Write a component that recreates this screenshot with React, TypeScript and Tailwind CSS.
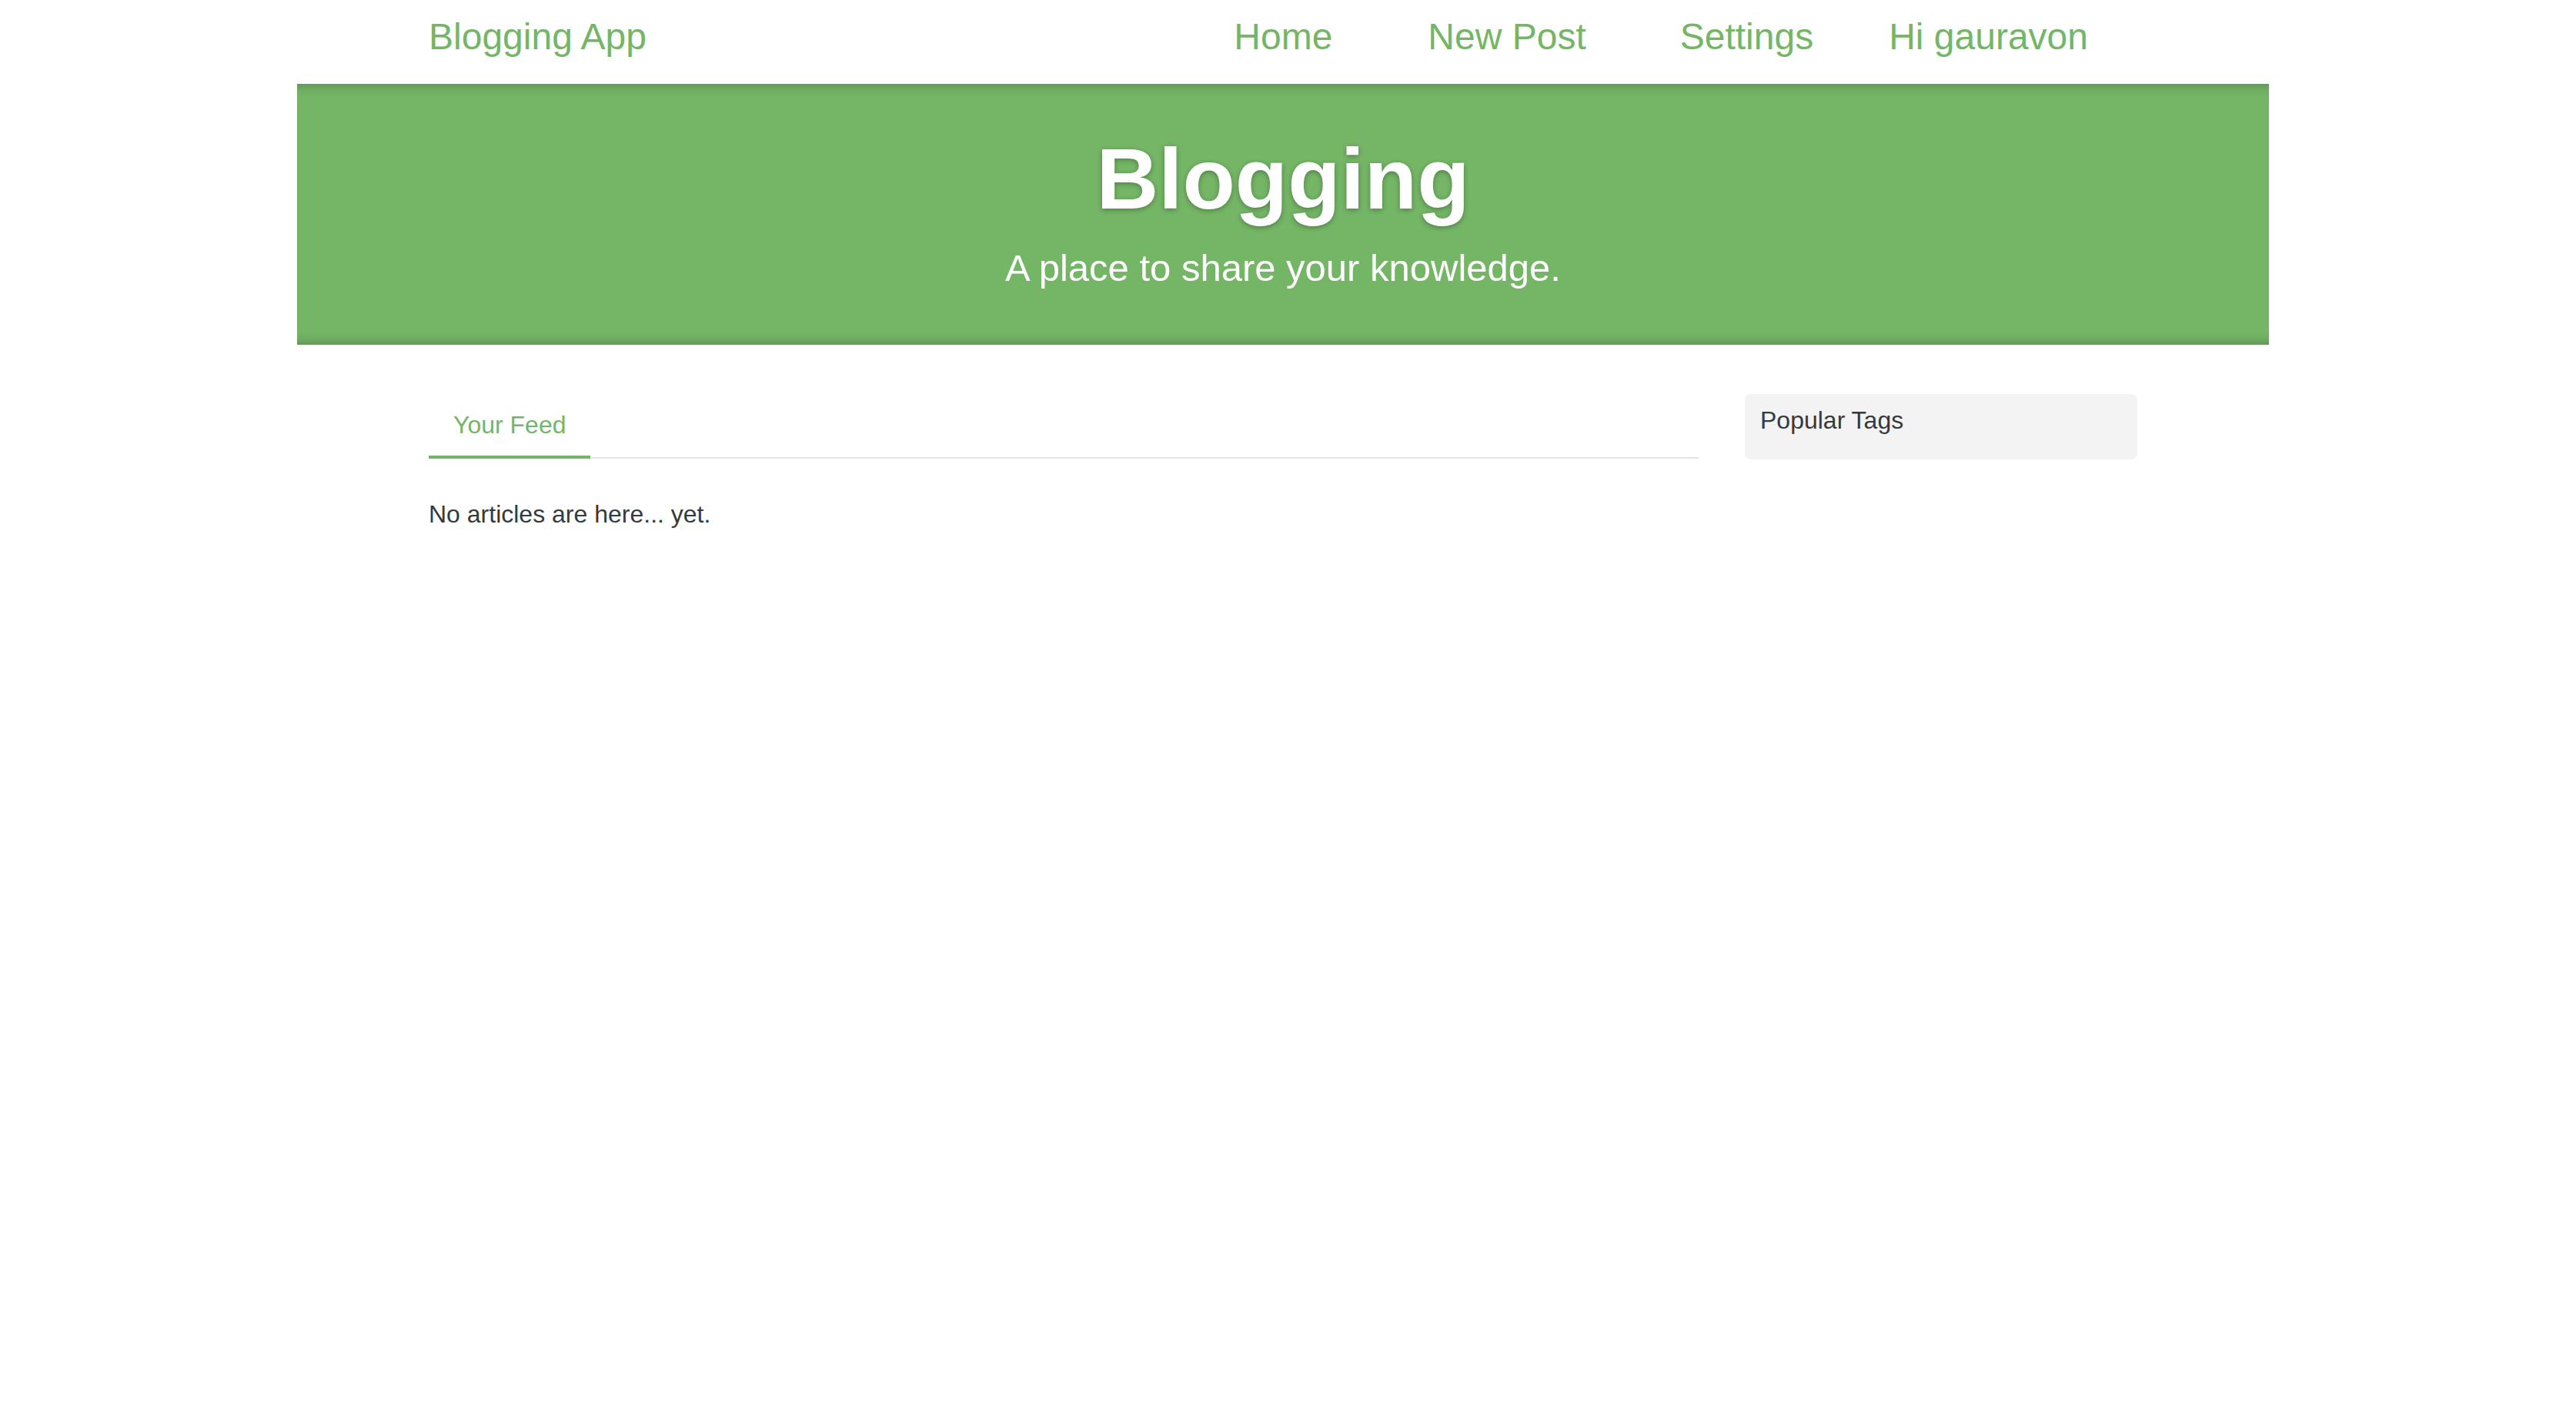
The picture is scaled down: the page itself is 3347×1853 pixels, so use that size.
const GREEN = "text-[#74b566]";

function NavBar() {
  return (
    <nav className="mx-auto flex h-[109px] w-[2220px] items-center pb-[13px]">
      <a className={`text-[48px] leading-none ${GREEN}`}>Blogging App</a>
      <div className="ml-auto flex items-center pr-[64px] text-[48px] leading-none text-[#74b566]">
        <a>Home</a>
        <a className="ml-[124px]">New Post</a>
        <a className="ml-[122px]">Settings</a>
        <a className="ml-[98px]">Hi gauravon</a>
      </div>
    </nav>
  );
}

function Banner() {
  return (
    <div className="mx-[386px] flex h-[339px] flex-col items-center bg-[#74b566] pt-[62px] text-white shadow-[inset_0_16px_16px_-16px_rgba(0,0,0,0.3),inset_0_-16px_16px_-16px_rgba(0,0,0,0.3)]">
      <h1 className="text-[112px] font-bold leading-[1.1] [text-shadow:0_2px_6px_rgba(0,0,0,0.3)]">
        Blogging
      </h1>
      <p className="mt-[25px] text-[49px] font-light leading-[1.2]">
        A place to share your knowledge.
      </p>
    </div>
  );
}

export default function App() {
  return (
    <div className="min-h-screen w-[3334px] bg-white font-['Liberation_Sans',Arial,sans-serif] text-[#373a3c]">
      <NavBar />
      <Banner />

      <div className="mx-auto mt-[64px] flex w-[2220px] items-start gap-[60px]">
        {/* Feed */}
        <div className="w-[1650px]">
          <ul className="flex border-b-2 border-[#e5e5e5]">
            <li className="-mb-[2px] border-b-4 border-[#74b566] px-[32px] py-[16px] text-[32px] leading-[48px] text-[#74b566]">
              Your Feed
            </li>
          </ul>
          <p className="mt-[48px] text-[32px] leading-[48px]">No articles are here... yet.</p>
        </div>

        {/* Sidebar */}
        <div className="h-[85px] w-[510px] rounded-[8px] bg-[#f3f3f3] px-[20px] pt-[10px]">
          <p className="text-[32px] leading-[48px]">Popular Tags</p>
        </div>
      </div>
    </div>
  );
}
